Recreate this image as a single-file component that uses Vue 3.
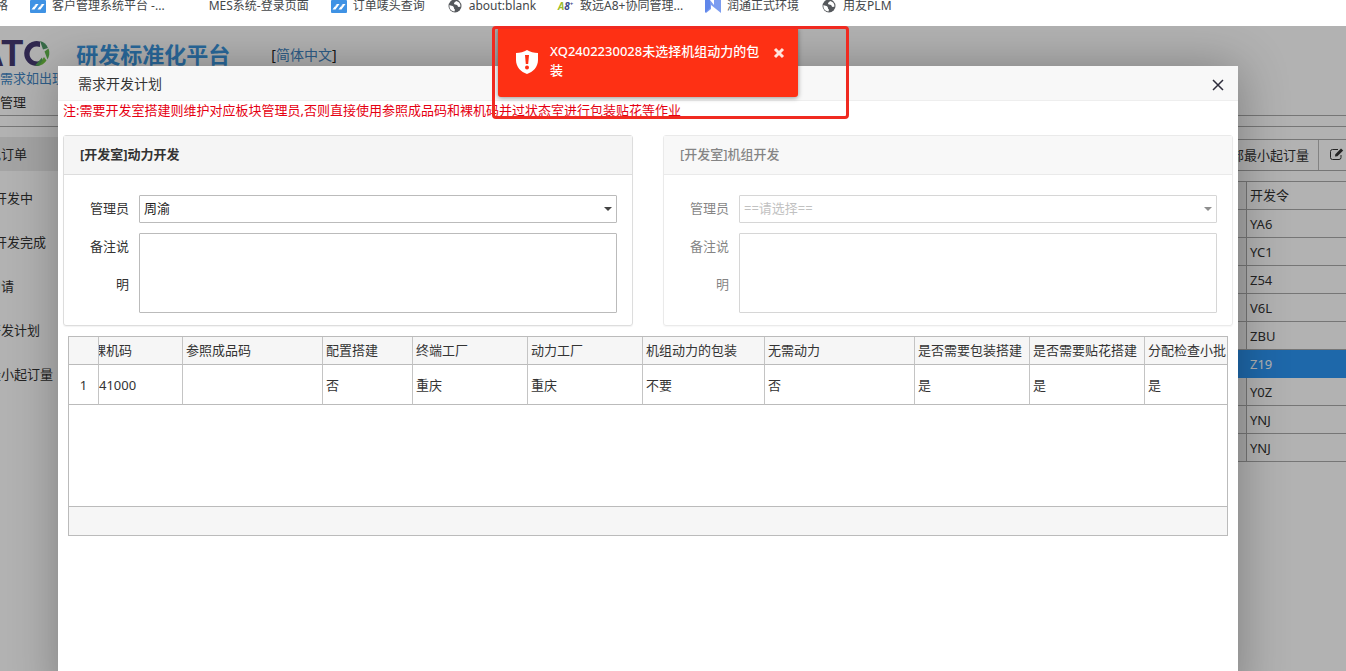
<script setup>
import { ref } from 'vue'

const bookmarks = [
  { icon: 'none', text: '格' },
  { icon: 'zoho', text: '客户管理系统平台 -...' },
  { icon: 'blank', text: 'MES系统-登录页面' },
  { icon: 'zoho', text: '订单唛头查询' },
  { icon: 'globe', text: 'about:blank' },
  { icon: 'a8', text: '致远A8+协同管理...' },
  { icon: 'flag', text: '润通正式环境' },
  { icon: 'globe', text: '用友PLM' }
]

const menu = [
  { text: '现订单', active: true },
  { text: '开发中', sub: true },
  { text: '开发完成', sub: true },
  { text: '申请' },
  { text: '开发计划' },
  { text: '最小起订量' }
]

const codes = ['YA6', 'YC1', 'Z54', 'V6L', 'ZBU', 'Z19', 'Y0Z', 'YNJ', 'YNJ']

const columns = [
  { head: '', value: '1', cls: 'num' },
  { head: '裸机码', value: '41000', cls: 'scrolled' },
  { head: '参照成品码', value: '', cls: 'ref' },
  { head: '配置搭建', value: '否', cls: 'config' },
  { head: '终端工厂', value: '重庆', cls: 'mid' },
  { head: '动力工厂', value: '重庆', cls: 'mid' },
  { head: '机组动力的包装', value: '不要', cls: 'pack' },
  { head: '无需动力', value: '否', cls: 'wide' },
  { head: '是否需要包装搭建', value: '是', cls: 'mid' },
  { head: '是否需要贴花搭建', value: '是', cls: 'mid' },
  { head: '分配检查小批', value: '是', cls: 'last' }
]

const panels = ref([
  { id: 'power', title: '[开发室]动力开发', manager: '周渝', note: '', disabled: false },
  { id: 'unit', title: '[开发室]机组开发', manager: '==请选择==', note: '', disabled: true }
])
</script>

<template>
  <div class="screen">
    <nav class="bookmarks">
      <a v-for="(b, i) in bookmarks" :key="i" href="#" class="bookmark">
        <span v-if="b.icon === 'blank'" class="ico"></span>
        <svg v-else-if="b.icon === 'zoho'" class="ico" viewBox="0 0 16 16">
          <rect width="16" height="13" rx="1" fill="#3f92e4" />
          <path d="M1.500 9.500 5.500 4h3L4.500 9.500zM7.500 9.500 11.500 4h3l-4 5.500z" fill="#fff" />
          <path d="m3.500 7 2-2.500M9.500 7l2-2.500" stroke="#3f92e4" stroke-width=".6" />
        </svg>
        <svg v-else-if="b.icon === 'globe'" class="ico" viewBox="0 0 16 16">
          <circle cx="8" cy="6" r="6.500" fill="#55585c" />
          <path d="M2.500 5c1.500 1 3 .5 4 1.800.8 1.200 0 2.200 1.500 2.700l-.5 2C4 11 2 8.500 2.500 5zM9 1c-.5 1.500-2 1.200-2 2.500 0 1.500 2 .8 3 1.500.8.600.5 2 2 2l1.500-.5C13.500 3.500 12 1.500 9 1z" fill="#fff" />
        </svg>
        <span v-else-if="b.icon === 'a8'" class="ico a8"><i>A</i>8<sup>+</sup></span>
        <svg v-else-if="b.icon === 'flag'" class="ico" viewBox="0 0 16 16">
          <path d="M0 0h5l4 5V0h7v13l-5-4-5-4v4l-5 4z" fill="#7b9cf0" />
          <path d="M0 0h5v8l-5 5z" fill="#5f86ea" />
        </svg>
        <span>{{ b.text }}</span>
      </a>
    </nav>

    <div class="app">
      <header class="top">
        <div class="brand">
          <span class="letters">AT</span>
          <svg class="ring" viewBox="0 0 28 28">
            <path d="M17 1.500A12.500 12.500 0 1 0 15 26l1.500-5A7.500 7.500 0 1 1 17 7z" fill="#453a72" />
            <path d="M17 1c4 1 6.500 3.500 8 7l-5 1.500z" fill="#4f9a68" />
            <path d="M25.500 8.500c1.500 4 .8 8-1 11l-3-8z" fill="#62b84c" />
            <path d="M23.500 20.500c-2 3-5 5-8.500 5.500l6-9z" fill="#6fc342" />
            <path d="m12 25.500 7-8 .5 3-3.500 5.500z" fill="#58a85a" />
          </svg>
          <h1>研发标准化平台</h1>
          <span class="lang">[<a href="#">简体中文</a>]</span>
        </div>
        <a href="#" class="notice">需求如出现</a>
        <div class="tabs">管理</div>
      </header>
      <div class="work">
        <ul class="side">
          <li v-for="m in menu" :key="m.text" :class="{ active: m.active, sub: m.sub }"><span>{{ m.text }}</span></li>
        </ul>
        <section class="main">
          <div class="tools">
            <button type="button" class="tool">部最小起订量</button>
            <button type="button" class="tool edit" aria-label="编辑">
              <svg viewBox="0 0 14 12"><path d="M11 7v2.500a2 2 0 0 1-2 2H2.500a2 2 0 0 1-2-2V3.500a2 2 0 0 1 2-2H8" fill="none" stroke="#333" /><path d="m5 8.500.3-2.300L11 .5l2.200 2L7.400 8.200z" fill="#333" /></svg>
            </button>
          </div>
          <table class="codes">
            <thead><tr><th class="stub"></th><th>开发令</th></tr></thead>
            <tbody>
              <tr v-for="(c, i) in codes" :key="i" :class="{ picked: c === 'Z19' }"><td class="stub"></td><td>{{ c }}</td></tr>
            </tbody>
          </table>
        </section>
      </div>

      <div class="shade"></div>

      <div class="dialog" role="dialog" aria-labelledby="dlg-title">
        <div class="dlg-head">
          <h2 id="dlg-title">需求开发计划</h2>
          <button type="button" class="close" aria-label="关闭">
            <svg viewBox="0 0 12 12"><path d="m1 1 10 10M11 1 1 11" stroke="#2e2d3c" stroke-width="1.500" /></svg>
          </button>
        </div>
        <p class="hint">注:需要开发室搭建则维护对应板块管理员,否则直接使用参照成品码和裸机码并过状态室进行包装贴花等作业</p>
        <div class="panels">
          <section v-for="p in panels" :key="p.id" class="panel" :class="{ off: p.disabled }">
            <h3>{{ p.title }}</h3>
            <div class="fields">
              <label :for="p.id + '-manager'">管理员</label>
              <div class="pick">
                <select :id="p.id + '-manager'" v-model="p.manager" :disabled="p.disabled">
                  <option>{{ p.manager }}</option>
                </select>
                <svg class="caret" viewBox="0 0 8 4"><path d="M0 0h8L4 4z" fill="currentColor" /></svg>
              </div>
              <label :for="p.id + '-note'">备注说明</label>
              <textarea :id="p.id + '-note'" v-model="p.note" :disabled="p.disabled"></textarea>
            </div>
          </section>
        </div>
        <div class="grid">
          <table class="plan">
            <thead><tr><th v-for="(c, i) in columns" :key="i" :class="c.cls">{{ c.head }}</th></tr></thead>
            <tbody><tr><td v-for="(c, i) in columns" :key="i" :class="c.cls">{{ c.value }}</td></tr></tbody>
          </table>
          <div class="grid-foot"></div>
        </div>
      </div>

      <div class="toast" role="alert">
        <svg class="shield" viewBox="0 0 22 24">
          <path d="M11 0c3 2 7 3 11 3v7c0 7-5 12-11 14C5 22 0 17 0 10V3c4 0 8-1 11-3z" fill="#fff" />
          <path d="M9 5h4l-.8 9H9.800z" fill="#fe3014" /><circle cx="11" cy="17.500" r="2" fill="#fe3014" />
        </svg>
        <p>XQ2402230028未选择机组动力的包装</p>
        <button type="button" aria-label="关闭提示">
          <svg viewBox="0 0 12 12"><path d="m2 2 8 8M10 2l-8 8" stroke="#ffe3dc" stroke-width="3" /></svg>
        </button>
      </div>
      <div class="frame"></div>
    </div>
  </div>
</template>

<style>
body {
  margin: 0;
  overflow: hidden;
}
</style>

<style scoped>
* {
  box-sizing: border-box;
}
.screen {
  display: flex;
  flex-direction: column;
  height: 100vh;
  overflow: hidden;
  font-family: "Noto Sans", "Noto Sans CJK SC", sans-serif;
  font-size: 13px;
  color: #333;
  background: #fff;
}
a {
  text-decoration: none;
}
button {
  font: inherit;
  color: inherit;
  border: 0;
  padding: 0;
  background: none;
}
svg {
  display: block;
}
.bookmarks {
  display: flex;
  gap: 22px;
  height: 26px;
  flex: none;
  white-space: nowrap;
}
.bookmark {
  display: flex;
  gap: 6px;
  height: 12px;
  font-size: 12px;
  line-height: 12px;
  color: #44474a;
}
.bookmark:first-child {
  width: 8px;
  justify-content: flex-end;
}
.ico {
  width: 16px;
  height: 16px;
  flex: none;
}
.a8 {
  font-size: 10px;
  font-weight: 700;
  font-style: italic;
  line-height: 12px;
  color: #3c4a8c;
}
.a8 i {
  color: #9dbb2a;
}
.a8 sup {
  font-size: 6px;
  line-height: 1px;
}
.app {
  position: relative;
  flex: 1;
  min-height: 0;
  overflow: hidden;
}
.top {
  height: 90px;
  border-bottom: 1px solid #aaa;
  overflow: hidden;
}
.brand {
  display: flex;
  align-items: center;
  height: 44px;
  padding-top: 12px;
  margin-left: -22px;
}
.letters {
  font: bold 36px/32px "Liberation Sans", Arial, sans-serif;
  color: #453a72;
}
.ring {
  width: 28px;
  height: 28px;
  flex: none;
}
.brand h1 {
  margin: 0 0 0 25px;
  font-size: 22px;
  line-height: 32px;
  color: #3c97e0;
}
.lang {
  margin-left: 41px;
  font-size: 14px;
  color: #222;
}
.lang a,
.notice {
  color: #4287c4;
}
.notice {
  display: block;
  height: 20px;
  line-height: 16px;
}
.tabs {
  height: 24px;
  line-height: 24px;
}
.work {
  display: flex;
  justify-content: space-between;
  margin-top: 10px;
  border-top: 1px solid #aaa;
}
.side {
  list-style: none;
  margin: 5px 0 0 -12px;
  padding: 0;
  width: 200px;
}
.side li {
  height: 44px;
  padding: 5px 0;
  line-height: 34px;
}
.side .sub {
  padding-left: 6px;
}
.side span {
  display: block;
}
.side .active span {
  background: #ebebeb;
}
.main {
  width: 126px;
  padding-top: 12px;
}
.tools {
  display: flex;
  height: 32px;
  border: solid #aaa;
  border-width: 1px 0;
}
.tool {
  width: 99px;
  padding: 0 0 2px 11px;
  text-align: left;
  white-space: nowrap;
  border-right: 1px solid #bbb;
}
.edit {
  width: 27px;
  border: 0;
  padding-left: 11px;
}
.edit svg {
  width: 14px;
  height: 12px;
}
table {
  border-collapse: separate;
  border-spacing: 0;
  table-layout: fixed;
  width: 100%;
}
th,
td {
  font-weight: 400;
  text-align: left;
  white-space: nowrap;
  overflow: hidden;
  padding: 0;
}
.codes {
  margin-top: 10px;
  border-top: 1px solid #aaa;
}
.codes th,
.codes td {
  height: 28px;
  padding-left: 3px;
  border-bottom: 1px solid #aaa;
}
.codes th,
.plan th {
  padding-bottom: 2px;
}
.codes .stub {
  width: 27px;
  border-right: 1px solid #aaa;
  background: #f2f2f2;
}
.codes .picked td {
  color: #fff;
  background: #2b96f4;
  border-color: #2b96f4;
}
.shade {
  position: absolute;
  inset: 0;
  background: rgba(0, 0, 0, 0.3);
}
.dialog {
  position: absolute;
  top: 40px;
  left: 58px;
  right: 108px;
  bottom: -30px;
  background: #fff;
  border-radius: 2px;
  box-shadow: 1px 1px 50px rgba(0, 0, 0, 0.3);
}
.dlg-head {
  display: flex;
  align-items: center;
  justify-content: space-between;
  height: 35px;
  padding: 0 14px 0 20px;
  background: #f8f8f8;
  border-bottom: 1px solid #eee;
}
.dlg-head h2 {
  margin: 0;
  font-size: 14px;
  font-weight: 400;
}
.close svg {
  width: 12px;
  height: 12px;
  margin-top: 3px;
}
.hint {
  margin: 0 5px;
  height: 34px;
  line-height: 18px;
  color: #e60012;
  white-space: nowrap;
}
.panels {
  display: grid;
  grid-template-columns: 1fr 1fr;
  gap: 30px;
  margin: 0 5px;
}
.panel {
  border: 1px solid #ddd;
  border-radius: 3px;
  box-shadow: 0 1px 1px rgba(0, 0, 0, 0.05);
}
.panel h3 {
  margin: 0;
  height: 39px;
  padding-left: 16px;
  font-size: 13px;
  line-height: 36px;
  background: #f5f5f5;
  border-bottom: 1px solid #ddd;
}
.off {
  opacity: 0.6;
}
.off h3 {
  font-weight: 500;
}
.fields {
  display: grid;
  grid-template-columns: 50px 1fr;
  column-gap: 10px;
  padding: 14px 15px 8px;
}
.fields label {
  text-align: right;
  line-height: 38px;
}
.pick {
  position: relative;
  margin: 6px 0 4px;
  height: 28px;
}
select,
textarea {
  display: block;
  width: 100%;
  font: inherit;
  color: #222;
  background: #fff;
  border: 1px solid #bbb;
  border-radius: 1px;
  appearance: none;
  opacity: 1;
}
select {
  height: 28px;
  padding: 0 4px 2px;
}
select:disabled {
  color: #999;
}
.caret {
  position: absolute;
  right: 5px;
  top: 12px;
  width: 8px;
  height: 4px;
  color: #444;
}
textarea {
  height: 80px;
  margin: 6px 0 4px;
  resize: none;
}
.grid {
  margin: 10px 10px 0;
  height: 200px;
  display: flex;
  flex-direction: column;
  justify-content: space-between;
  border: 1px solid #bbb;
}
.plan th,
.plan td {
  padding-left: 3px;
  border-right: 1px solid #c4c4c4;
  border-bottom: 1px solid #bbb;
}
.plan th {
  height: 28px;
  background: #f6f6f6;
}
.plan td {
  height: 40px;
}
.plan .num {
  width: 30px;
  padding: 0;
  text-align: center;
}
.plan .scrolled {
  width: 84px;
  padding-left: 0;
}
.plan th.scrolled {
  text-indent: -6px;
}
.plan .ref {
  width: 140px;
}
.plan .config {
  width: 90px;
}
.plan .mid {
  width: 115px;
}
.plan .pack {
  width: 122px;
}
.plan .wide {
  width: 150px;
}
.plan .last {
  border-right: 0;
}
.grid-foot {
  height: 29px;
  background: #f6f6f6;
  border-top: 1px solid #bbb;
}
.toast {
  position: absolute;
  top: 2px;
  left: calc(50% - 175px);
  width: 300px;
  height: 69px;
  display: flex;
  align-items: flex-start;
  padding: 14px 13px 0 18px;
  color: #fff;
  background: #fe3014;
  border-radius: 0 0 3px 3px;
  box-shadow: 0 1px 5px rgba(0, 0, 0, 0.4);
}
.shield {
  width: 22px;
  height: 24px;
  margin: 8px 12px 0 0;
  flex: none;
}
.toast p {
  flex: 1;
  margin: 0;
  font-weight: 500;
  line-height: 19px;
  word-break: break-all;
}
.toast button svg {
  width: 12px;
  height: 12px;
  margin: 5px 0 0 10px;
}
.frame {
  position: absolute;
  top: 0;
  left: calc(50% - 181px);
  width: 357px;
  height: 93px;
  border: 3px solid #f02a20;
  border-radius: 4px;
  pointer-events: none;
}
</style>
